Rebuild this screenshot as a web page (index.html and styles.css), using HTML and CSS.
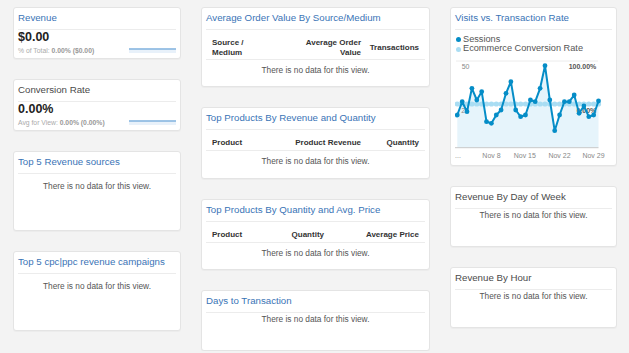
FILE: index.html
```html
<!DOCTYPE html>
<html lang="en">
<head>
    <meta charset="UTF-8">
    <meta name="viewport" content="width=device-width, initial-scale=1.0">
    <title>Ecommerce Dashboard</title>
    <link rel="stylesheet" href="styles.css">
</head>
<body>
    <div class="dashboard">
        <div class="column col-left">
            <div class="widget widget-metric">
                <h2 class="widget-title">Revenue</h2>
                <div class="metric-body">
                    <div>
                        <div class="metric-value">$0.00</div>
                        <div class="metric-sub">% of Total: <b>0.00% ($0.00)</b></div>
                    </div>
                    <svg class="sparkline" width="47" height="6">
                        <rect x="0" y="1.5" width="47" height="3.5" fill="#e8f1fa"/>
                        <line x1="0" y1="1" x2="47" y2="1" stroke="#7eb0de" stroke-width="1.4"/>
                    </svg>
                </div>
            </div>

            <div class="widget widget-metric">
                <h2 class="widget-title plain">Conversion Rate</h2>
                <div class="metric-body">
                    <div>
                        <div class="metric-value">0.00%</div>
                        <div class="metric-sub">Avg for View: <b>0.00% (0.00%)</b></div>
                    </div>
                    <svg class="sparkline" width="47" height="6">
                        <rect x="0" y="1.5" width="47" height="3.5" fill="#e8f1fa"/>
                        <line x1="0" y1="1" x2="47" y2="1" stroke="#7eb0de" stroke-width="1.4"/>
                    </svg>
                </div>
            </div>

            <div class="widget widget-list">
                <h2 class="widget-title">Top 5 Revenue sources</h2>
                <p class="empty spaced">There is no data for this view.</p>
            </div>

            <div class="widget widget-list">
                <h2 class="widget-title">Top 5 cpc|ppc revenue campaigns</h2>
                <p class="empty spaced">There is no data for this view.</p>
            </div>
        </div>

        <div class="column col-mid">
            <div class="widget widget-aov">
                <h2 class="widget-title">Average Order Value By Source/Medium</h2>
                <div class="table-head cols-aov">
                    <div class="th-narrow">Source / Medium</div>
                    <div class="num">Average Order Value</div>
                    <div class="num">Transactions</div>
                </div>
                <p class="empty table-empty">There is no data for this view.</p>
            </div>

            <div class="widget widget-products">
                <h2 class="widget-title">Top Products By Revenue and Quantity</h2>
                <div class="table-head cols-products">
                    <div>Product</div>
                    <div class="num">Product Revenue</div>
                    <div class="num">Quantity</div>
                </div>
                <p class="empty table-empty">There is no data for this view.</p>
            </div>

            <div class="widget widget-products-alt">
                <h2 class="widget-title">Top Products By Quantity and Avg. Price</h2>
                <div class="table-head cols-price">
                    <div>Product</div>
                    <div class="num">Quantity</div>
                    <div class="num">Average Price</div>
                </div>
                <p class="empty table-empty">There is no data for this view.</p>
            </div>

            <div class="widget widget-short">
                <h2 class="widget-title">Days to Transaction</h2>
                <p class="empty">There is no data for this view.</p>
            </div>
        </div>

        <div class="column col-right">
            <div class="widget widget-chart">
                <h2 class="widget-title">Visits vs. Transaction Rate</h2>
                <ul class="legend">
                    <li><span class="dot dot-sessions"></span>Sessions</li>
                    <li><span class="dot dot-rate"></span>Ecommerce Conversion Rate</li>
                </ul>
                <svg class="chart" width="152" height="104" viewBox="1 0 152 104">
                    <defs>
                        <marker id="dot-sessions" markerWidth="6" markerHeight="6" refX="3" refY="3" markerUnits="userSpaceOnUse">
                            <circle cx="3" cy="3" r="2.4" fill="#058dc7"/>
                        </marker>
                        <marker id="dot-rate" markerWidth="6" markerHeight="6" refX="3" refY="3" markerUnits="userSpaceOnUse">
                            <circle cx="3" cy="3" r="2.6" fill="#a9ddf3"/>
                        </marker>
                    </defs>
                    <line x1="2" y1="3" x2="144" y2="3" stroke="#ececec" stroke-width="1"/>
                    <polygon fill="#e6f4fb" points="3.3,89.7 3.3,57 8.2,43.7 13,53.7 17.9,30.3 22.8,42 27.7,33.7 32.5,63.7 37.4,65.3 42.3,57 47.1,52 52,35.3 56.9,23.7 61.7,52 66.6,58.7 71.5,57 76.4,42 81.2,43.7 86.1,30.3 91,7.7 95.8,42 100.7,72.7 105.6,57 110.4,43.7 115.3,43.7 120.2,37 125.1,55.3 129.9,48 134.8,58.7 139.7,57 144.5,43 144.5,89.7"/>
                    <line x1="0.7" y1="89.7" x2="144.5" y2="89.7" stroke="#c8c8c8" stroke-width="1"/>
                    <text class="axis" x="7.7" y="10.5">50</text>
                    <text class="axis axis-bold" x="142.3" y="10.5" text-anchor="end">100.00%</text>
                    <polyline fill="none" stroke="#b3e0f4" stroke-width="3" marker-start="url(#dot-rate)" marker-mid="url(#dot-rate)" marker-end="url(#dot-rate)" points="3.3,46 8.2,46 13,46 17.9,46 22.8,46 27.7,46 32.5,46 37.4,46 42.3,46 47.1,46 52,46 56.9,46 61.7,46 66.6,46 71.5,46 76.4,46 81.2,46 86.1,46 91,46 95.8,46 100.7,46 105.6,46 110.4,46 115.3,46 120.2,46 125.1,46 129.9,46 134.8,46 139.7,46 144.5,46"/>
                    <text class="axis" x="7.2" y="54.5">25</text>
                    <text class="axis axis-bold" x="142.3" y="54.5" text-anchor="end">0.00%</text>
                    <polyline fill="none" stroke="#058dc7" stroke-width="2" stroke-linejoin="round" marker-start="url(#dot-sessions)" marker-mid="url(#dot-sessions)" marker-end="url(#dot-sessions)" points="3.3,57 8.2,43.7 13,53.7 17.9,30.3 22.8,42 27.7,33.7 32.5,63.7 37.4,65.3 42.3,57 47.1,52 52,35.3 56.9,23.7 61.7,52 66.6,58.7 71.5,57 76.4,42 81.2,43.7 86.1,30.3 91,7.7 95.8,42 100.7,72.7 105.6,57 110.4,43.7 115.3,43.7 120.2,37 125.1,55.3 129.9,48 134.8,58.7 139.7,57 144.5,43"/>
                    <text class="axis" x="1" y="99.5">...</text>
                    <text class="axis" x="37.5" y="99.5" text-anchor="middle">Nov 8</text>
                    <text class="axis" x="70.8" y="99.5" text-anchor="middle">Nov 15</text>
                    <text class="axis" x="105.5" y="99.5" text-anchor="middle">Nov 22</text>
                    <text class="axis" x="139.5" y="99.5" text-anchor="middle">Nov 29</text>
                </svg>
            </div>

            <div class="widget widget-short">
                <h2 class="widget-title plain">Revenue By Day of Week</h2>
                <p class="empty">There is no data for this view.</p>
            </div>

            <div class="widget widget-short">
                <h2 class="widget-title plain">Revenue By Hour</h2>
                <p class="empty">There is no data for this view.</p>
            </div>
        </div>
    </div>
</body>
</html>
```

FILE: styles.css
```css
:root {
    --page-bg: #f3f3f3;
    --card-border: #e4e4e4;
    --rule: #ececec;
    --title-blue: #3a74b6;
    --text-color: #333;
    --muted: #555;
}

* {
    margin: 0;
    padding: 0;
    box-sizing: border-box;
}

body {
    font-family: "Liberation Sans", Arial, sans-serif;
    background-color: var(--page-bg);
    color: var(--text-color);
}

.dashboard {
    display: flex;
    align-items: flex-start;
    gap: 20px;
    padding: 7px 12px 0 13px;
}

.column {
    display: flex;
    flex-direction: column;
    gap: 20px;
}

.col-left {
    width: 168px;
}

.col-mid {
    width: 229px;
}

.col-right {
    width: 167px;
}

.widget {
    background: white;
    border: 1px solid var(--card-border);
    border-radius: 3px;
    padding: 0 4px;
    box-shadow: 0 1px 1px rgba(0, 0, 0, 0.03);
}

.widget-metric {
    height: 52px;
}

.widget-list {
    height: 80px;
}

.widget-aov {
    height: 80px;
}

.widget-products {
    height: 72px;
}

.widget-products-alt {
    height: 71px;
}

.widget-short {
    height: 61px;
}

.widget-chart {
    height: 159px;
}

.widget-title {
    font-size: 9.7px;
    font-weight: normal;
    line-height: 12px;
    padding: 4px 0 5px;
    color: var(--title-blue);
    border-bottom: 1px solid var(--rule);
    white-space: nowrap;
}

.widget-title.plain {
    color: #4a4a4a;
}

/* metric tiles */
.metric-body {
    display: flex;
    justify-content: space-between;
    align-items: flex-end;
}

.metric-value {
    font-size: 12.5px;
    font-weight: bold;
    line-height: 14px;
    color: #222;
}

.metric-sub {
    font-size: 6.8px;
    line-height: 9px;
    margin-top: 2px;
    color: #aaa;
    white-space: nowrap;
}

.metric-sub b {
    color: #999;
}

.sparkline {
    display: block;
    margin-bottom: 1px;
}

/* tables */
.table-head {
    display: grid;
    column-gap: 7px;
    align-items: center;
    padding: 8px 6px 2px;
    border-bottom: 1px solid var(--rule);
    font-size: 8px;
    font-weight: bold;
    line-height: 9.6px;
    color: #333;
}

.cols-aov {
    grid-template-columns: 1fr 58px 51px;
}

.cols-products {
    grid-template-columns: 1fr 75px 51px;
}

.cols-price {
    grid-template-columns: 1fr 60px 88px;
}

.th-narrow {
    max-width: 50px;
}

.num {
    text-align: right;
}

.empty {
    font-size: 8.3px;
    line-height: 10px;
    text-align: center;
    color: var(--muted);
    padding-top: 1px;
}

.empty.spaced {
    padding-top: 7px;
}

.empty.table-empty {
    padding-top: 5px;
}

/* chart */
.legend {
    list-style: none;
    margin-top: 5px;
    font-size: 9.2px;
    line-height: 9.4px;
    color: var(--muted);
}

.legend li {
    display: flex;
    align-items: center;
    gap: 2px;
    padding-left: 1px;
}

.dot {
    width: 5px;
    height: 5px;
    border-radius: 50%;
}

.dot-sessions {
    background: #058dc7;
}

.dot-rate {
    background: #a9ddf3;
}

.chart {
    display: block;
    margin-top: 4px;
}

.axis {
    font-size: 7px;
    fill: #888;
}

.axis-bold {
    font-weight: bold;
    fill: #555;
}
```
